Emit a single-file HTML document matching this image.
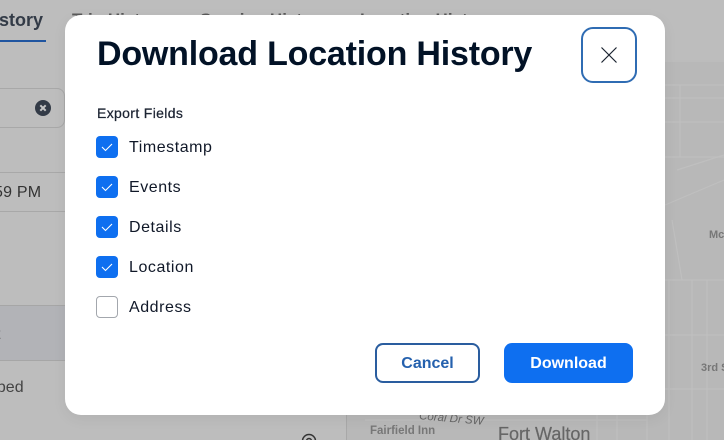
<!DOCTYPE html>
<html><head><meta charset="utf-8">
<style>
html,body{margin:0;padding:0;width:724px;height:440px;overflow:hidden}
body{position:relative;background:#bdbdbd;font-family:"Liberation Sans",sans-serif}
.a{position:absolute;white-space:nowrap}
.cb{position:absolute;left:96px;width:22px;height:22px;border-radius:4px;background:#0e6ff0}
.cb svg{position:absolute;left:0;top:0}
.lb{position:absolute;left:129px;font-size:16px;line-height:20px;color:#101828;white-space:nowrap;letter-spacing:.55px}
</style></head>
<body>
<!-- background -->
<div class="a" style="left:0;top:0;width:347px;height:440px;background:#bdbdbd"></div>
<div class="a" style="left:0;top:305px;width:347px;height:56px;background:#b2b3b7;border-top:1px solid #a6a6a6;border-bottom:1px solid #a6a6a6;box-sizing:border-box"></div>
<div class="a" style="left:346px;top:60px;width:1px;height:380px;background:#a8a8a8"></div>
<div class="a" style="left:347px;top:60px;width:377px;height:380px;background:#b8b8b8"></div>
<svg class="a" style="left:347px;top:0" width="377" height="440" fill="none" stroke="#bfbfbf" stroke-width="1.2">
<path d="M318 61H377M318 85H377M318 98H377M318 122H377M318 157H377M318 280H377M318 389H377"/>
<path d="M333 85V122Q333 125 333 157M382 100V157M330 170L377 155M318 205L377 180" />
<path d="M325 220L335 280M322 280V440M345 280V440M360 440V280M318 335H377M18 420H300M250 400V440M270 400V440M300 380V440"/>
</svg>
<div class="a" style="left:-6px;top:9px;font-size:18px;line-height:22px;color:#333b47;font-weight:700">istory</div>
<div class="a" style="left:0;top:40px;width:46px;height:2px;background:#2055a0"></div>
<div class="a" style="left:72px;top:10px;font-size:17px;line-height:20px;color:#5a5a5a;font-weight:700">Trip History</div>
<div class="a" style="left:200px;top:10px;font-size:17px;line-height:20px;color:#5a5a5a;font-weight:700">Session History</div>
<div class="a" style="left:360px;top:10px;font-size:17px;line-height:20px;color:#5a5a5a;font-weight:700">Location History</div>
<div class="a" style="left:-12px;top:88px;width:77px;height:40px;border:1px solid #a8a8a8;border-radius:8px;box-sizing:border-box"></div>
<svg class="a" style="left:35px;top:100px" width="16" height="16"><circle cx="8" cy="8" r="8" fill="#333b47"/><path d="M5.3 5.3L10.700 10.700M10.700 5.300L5.300 10.700" stroke="#c6c6c6" stroke-width="2"/></svg>
<div class="a" style="left:0;top:172px;width:65px;height:1px;background:#a8a8a8"></div>
<div class="a" style="left:0;top:211px;width:65px;height:1px;background:#a8a8a8"></div>
<div class="a" style="left:-6px;top:183px;font-size:16px;line-height:20px;color:#333;letter-spacing:.2px">59 PM</div>
<div class="a" style="left:-12px;top:378px;font-size:16px;line-height:20px;color:#444">pped</div>
<div class="a" style="left:-4px;top:325px;font-size:16px;line-height:20px;color:#444">t</div>
<svg class="a" style="left:301px;top:433px" width="16" height="7" fill="none" stroke="#333" stroke-width="1.5"><circle cx="8" cy="8" r="6.5"/><circle cx="8" cy="8" r="2.5"/></svg>
<div class="a" style="left:370px;top:424px;font-size:11.5px;line-height:14px;font-weight:700;color:#777">Fairfield Inn</div>
<div class="a" style="left:419px;top:412px;font-size:11.5px;line-height:14px;font-style:italic;color:#666;transform:rotate(5deg)">Coral Dr SW</div>
<div class="a" style="left:498px;top:424px;font-size:18px;line-height:20px;color:#666;-webkit-text-stroke:.2px #666">Fort Walton</div>
<div class="a" style="left:709px;top:228px;font-size:11px;line-height:14px;font-weight:700;color:#777">Mc</div>
<div class="a" style="left:701px;top:361px;font-size:11px;line-height:14px;font-weight:700;color:#777">3rd St</div>
<!-- modal -->
<div class="a" style="left:65px;top:15px;width:600px;height:400px;background:#fff;border-radius:16px;box-shadow:0 4px 14px rgba(0,0,0,.06)"></div>
<div class="a" style="left:97px;top:33px;font-size:34px;line-height:42px;font-weight:700;color:#021226;letter-spacing:-.2px">Download Location History</div>
<div class="a" style="left:581px;top:27px;width:56px;height:56px;border:2px solid #2f6cb3;border-radius:12px;box-sizing:border-box"></div>
<svg class="a" style="left:601px;top:47px" width="16" height="16" fill="none" stroke="#1a2230" stroke-width="1.2"><path d="M.5 .5L15.500 15.500M15.500 .5L.5 15.500"/></svg>
<div class="a" style="left:97px;top:105px;font-size:14px;line-height:17px;color:#1d2433;letter-spacing:.35px;-webkit-text-stroke:.25px #1d2433">Export Fields</div>

<div class="cb" style="top:136px"><svg width="22" height="22" fill="none" stroke="#fff" stroke-width="1.1"><path d="M6 11L9.500 14.500L16 8"/></svg></div>
<div class="lb" style="top:138px">Timestamp</div>
<div class="cb" style="top:176px"><svg width="22" height="22" fill="none" stroke="#fff" stroke-width="1.1"><path d="M6 11L9.500 14.500L16 8"/></svg></div>
<div class="lb" style="top:178px">Events</div>
<div class="cb" style="top:216px"><svg width="22" height="22" fill="none" stroke="#fff" stroke-width="1.1"><path d="M6 11L9.500 14.500L16 8"/></svg></div>
<div class="lb" style="top:218px">Details</div>
<div class="cb" style="top:256px"><svg width="22" height="22" fill="none" stroke="#fff" stroke-width="1.1"><path d="M6 11L9.500 14.500L16 8"/></svg></div>
<div class="lb" style="top:258px">Location</div>
<div class="cb" style="top:296px;background:#fff;border:1px solid #a3a7ad;box-sizing:border-box"></div>
<div class="lb" style="top:298px">Address</div>

<div class="a" style="left:375px;top:343px;width:105px;height:40px;border:2px solid #2a5d9f;border-radius:8px;box-sizing:border-box;text-align:center;font-size:16px;line-height:38px;font-weight:700;color:#2561ae">Cancel</div>
<div class="a" style="left:504px;top:343px;width:129px;height:40px;background:#0e6ff0;border-radius:8px;text-align:center;font-size:16px;line-height:41px;font-weight:700;color:#fff">Download</div>
</body></html>
